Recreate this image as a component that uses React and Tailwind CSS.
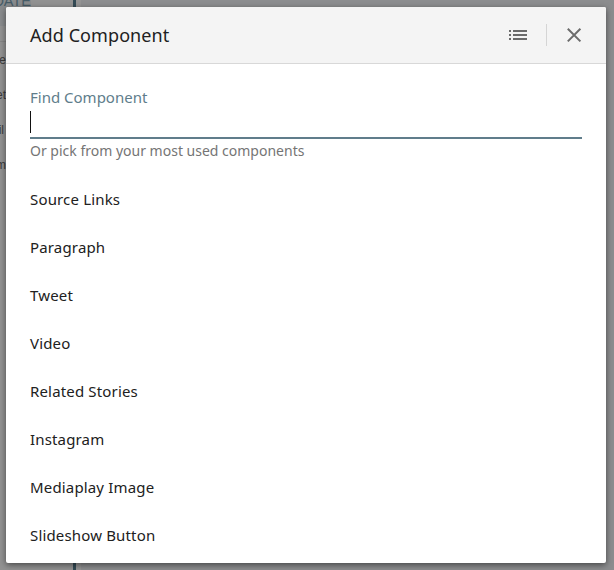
const items = [
  'Source Links',
  'Paragraph',
  'Tweet',
  'Video',
  'Related Stories',
  'Instagram',
  'Mediaplay Image',
  'Slideshow Button',
];

const rowEndings = ['e', 'et', 'il', 'm'];

function Backdrop() {
  return (
    <div className="flex h-full w-full bg-[#929292]">
      <div className="flex w-[73px] shrink-0 flex-col overflow-hidden font-['Liberation_Sans',sans-serif]">
        <div className="flex h-[26px] w-[31px] shrink-0 items-start justify-end bg-[#898b8d] text-[14.5px] leading-[3px] text-[#465c67]">
          DATE
        </div>
        <div className="h-4 shrink-0 border-b border-[#858585]" />
        {rowEndings.map((text) => (
          <div
            key={text}
            className={`flex h-[35px] shrink-0 items-center justify-end text-[12px] text-[#3a3a3a] ${text === 'il' ? 'w-[4px]' : 'w-[6px]'}`}
          >
            {text}
          </div>
        ))}
      </div>
      <div className="w-[3px] shrink-0 bg-[#344b55]" />
      <div className="w-[5px] shrink-0 bg-[#949494]" />
      <div className="flex-1 bg-[#8c8d8f]" />
    </div>
  );
}

export default function App() {
  return (
    <div className="relative h-[570px] w-[614px] overflow-hidden font-['Noto_Sans',sans-serif]">
      <Backdrop />
      <div className="absolute top-[7px] left-[6px] flex h-[556px] w-[600px] flex-col rounded-[2px] bg-white shadow-[0_2px_6px_rgba(0,0,0,0.5)]">
        <header className="flex h-[57px] shrink-0 items-center rounded-t-[2px] border-b border-[#d8d8d8] bg-[#f4f4f4] pr-[22px] pl-6">
          <h1 className="flex-1 text-[18px] leading-6 tracking-[0.08px] text-[#212121]">Add Component</h1>
          <svg width="20" height="20" viewBox="0 0 20 20" fill="#6b6b6b" className="mr-[18px]">
            <path d="M1 5h2v2H1zM5 5h14v2H5zM1 9h2v2H1zM5 9h14v2H5zM1 13h2v2H1zM5 13h14v2H5z" />
          </svg>
          <div className="mr-[17px] h-[22px] w-px bg-[#d5d5d5]" />
          <svg width="20" height="20" viewBox="0 0 20 20" fill="none" stroke="#6b6b6b" strokeWidth="2">
            <path d="M3.8 3.8l12.6 12.6M16.4 3.8L3.8 16.4" />
          </svg>
        </header>
        <div className="flex flex-col px-6 pt-[23px]">
          <label className="h-5 text-[15px] leading-5 text-[#607d8b]">Find Component</label>
          <div className="flex h-8 items-start border-b-2 border-[#607d8b] pt-1">
            <div className="h-[22px] w-px bg-[#111]" />
          </div>
          <p className="h-6 text-[14px] leading-6 text-[#757575]">
            Or pick from your most used components
          </p>
          <ul className="pt-3">
            {items.map((item) => (
              <li key={item} className="flex h-12 items-center text-[15px] tracking-[0.16px] text-[#212121]">
                {item}
              </li>
            ))}
          </ul>
        </div>
      </div>
    </div>
  );
}
